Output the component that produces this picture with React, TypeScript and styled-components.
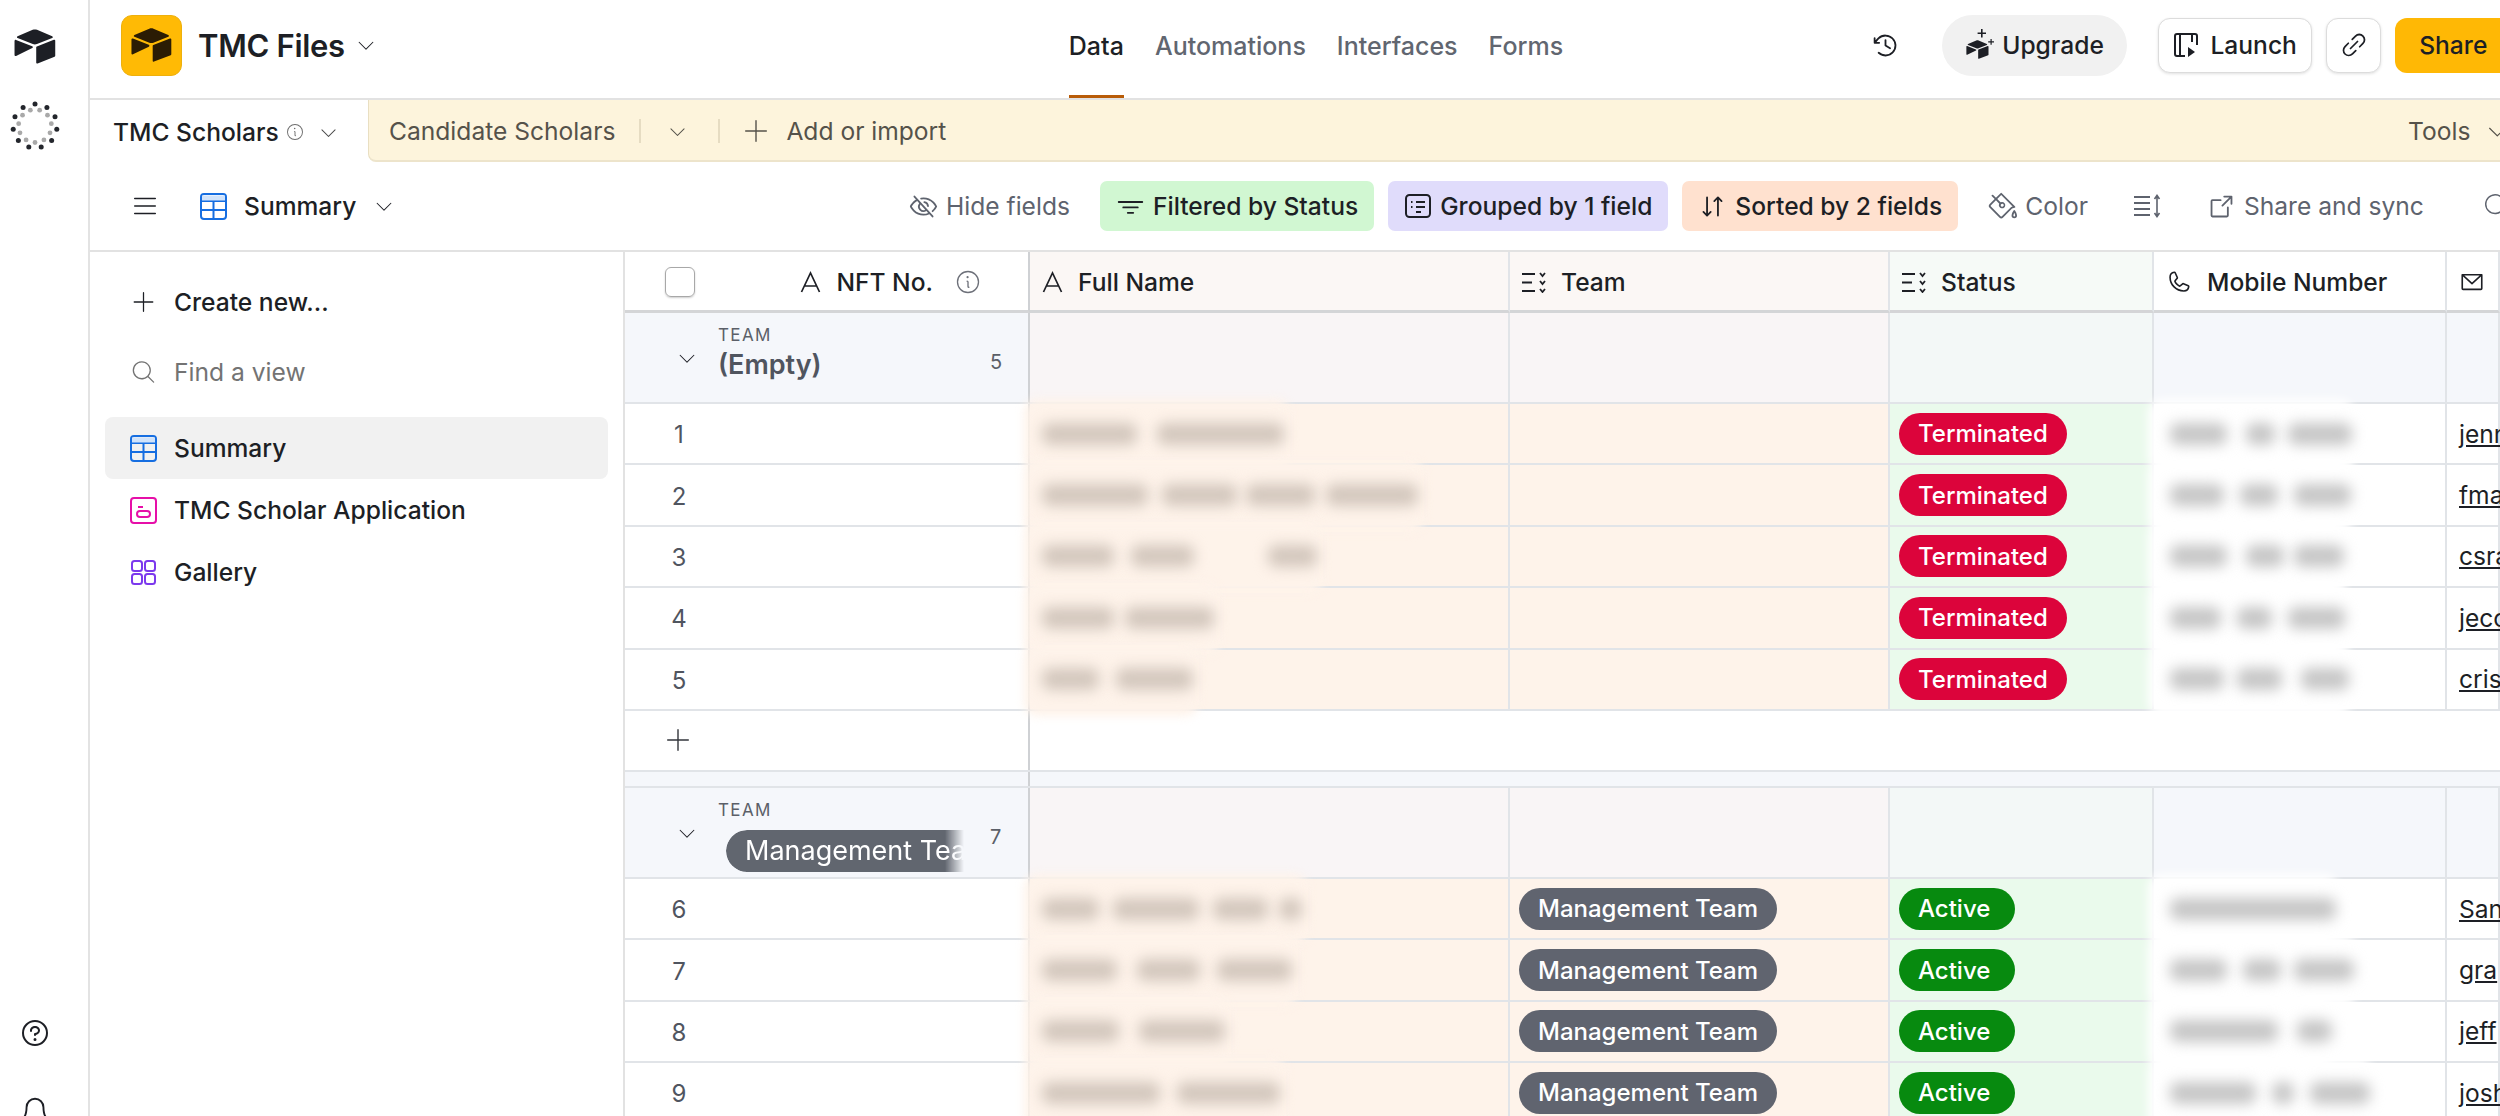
import React from 'react';
import styled, { createGlobalStyle } from 'styled-components';
import {
  PiArrowSquareOut,
  PiArrowsDownUp,
  PiBell,
  PiCaretDownLight,
  PiClockCounterClockwise,
  PiEnvelopeSimple,
  PiEyeSlash,
  PiFunnelSimple,
  PiInfoLight,
  PiLinkSimple,
  PiListLight,
  PiMagnifyingGlassLight,
  PiPaintBucket,
  PiPhone,
  PiPlusLight,
  PiQuestion,
} from 'react-icons/pi';

const COLUMNS = '405px 480px 380px 264px 293px 53px';
const ROW_HEIGHT = '61.4px';
const TEXT_SIZE = '24.6px';

const GlobalStyle = createGlobalStyle`
  html, body {
    margin: 0;
    height: 100%;
    overflow: hidden;
    background: #fff;
  }
  body {
    font-family: Inter, "Noto Sans", "Liberation Sans", sans-serif;
    color: #1d1f25;
  }
`;

const Page = styled.div`
  display: flex;
  width: 2500px;
  height: 1116px;
  overflow: hidden;
`;

const Rail = styled.nav`
  flex: 0 0 90px;
  display: flex;
  flex-direction: column;
  align-items: center;
  box-sizing: border-box;
  padding: 27px 18px 0 0;
  border-right: 2px solid #e3e3e3;
`;

const RailLogo = styled.div`
  display: flex;
  margin-bottom: 34px;
`;

const RailSpinner = styled.svg`
  width: 52px;
  height: 52px;
  flex: none;
`;

const RailHelp = styled.div`
  display: flex;
  margin-top: 865px;
  font-size: 32px;
  color: #1d1f25;
  flex: none;
`;

const RailBell = styled.div`
  display: flex;
  margin-top: 46px;
  font-size: 30px;
  color: #1d1f25;
  flex: none;
`;

const Main = styled.div`
  flex: 1;
  min-width: 0;
  display: flex;
  flex-direction: column;
`;

const Header = styled.header`
  flex: 0 0 100px;
  box-sizing: border-box;
  display: flex;
  align-items: center;
  padding: 0 0 8px 31px;
  border-bottom: 2px solid #e2e2e2;
  overflow: hidden;
`;

const AppBadge = styled.div`
  width: 61px;
  height: 61px;
  box-sizing: border-box;
  border: 1px solid #eeb00d;
  border-radius: 11px;
  background: #ffba05;
  display: flex;
  align-items: center;
  justify-content: center;
  margin-right: 16px;
  flex: none;
`;

const AppTitle = styled.div`
  font-size: 31px;
  font-weight: 600;
  letter-spacing: -0.3px;
  color: #1d1f25;
  width: 153px;
  white-space: nowrap;
`;

const HeaderCaret = styled.span`
  display: flex;
  margin-left: 10px;
  font-size: 22px;
`;

const TopNav = styled.div`
  display: flex;
  gap: 31px;
  margin: 2px 0 0 692px;
`;

const TopNavItem = styled.span<{ $active?: boolean }>`
  font-size: 25px;
  font-weight: 500;
  color: ${(p) => (p.$active ? '#1d1f25' : '#616670')};
  position: relative;
  &::after {
    content: '';
    display: ${(p) => (p.$active ? 'block' : 'none')};
    position: absolute;
    left: 0;
    right: 0;
    top: 64px;
    height: 4px;
    background: #b85c08;
  }
`;

const HeaderActions = styled.div`
  display: flex;
  align-items: center;
  margin-left: 308px;
  flex: none;
`;

const HistoryIcon = styled.span`
  display: flex;
  font-size: 29px;
  margin-right: 42px;
`;

const UpgradePill = styled.div`
  display: flex;
  align-items: center;
  gap: 7px;
  height: 61px;
  width: 185px;
  box-sizing: border-box;
  padding-left: 23px;
  border-radius: 31px;
  background: #f1f1f1;
  font-size: ${TEXT_SIZE};
  font-weight: 500;
  margin-right: 31px;
`;

const OutlineButton = styled.div<{ $square?: boolean }>`
  display: flex;
  align-items: center;
  justify-content: center;
  gap: 12px;
  height: 55px;
  width: ${(p) => (p.$square ? '55px' : '154px')};
  box-sizing: border-box;
  border: 1px solid #dcdcdc;
  border-radius: 12px;
  box-shadow: 0 1px 3px rgba(0, 0, 0, 0.12);
  background: #fff;
  font-size: ${TEXT_SIZE};
  font-weight: 500;
  margin-right: 14px;
`;

const ShareButton = styled.div`
  display: flex;
  align-items: center;
  height: 55px;
  width: 130px;
  box-sizing: border-box;
  padding-left: 24px;
  border-radius: 12px;
  background: #ffb805;
  font-size: ${TEXT_SIZE};
  font-weight: 500;
`;

const TabBar = styled.div`
  flex: 0 0 62px;
  display: flex;
  background: #fff;
`;

const ActiveTab = styled.div`
  flex: 0 0 278px;
  box-sizing: border-box;
  display: flex;
  align-items: center;
  padding: 2px 0 0 23px;
  font-size: ${TEXT_SIZE};
  font-weight: 500;
`;

const TabInfo = styled.span`
  display: flex;
  font-size: 20px;
  color: #6d6d6d;
  margin-left: 6px;
`;

const TabCaret = styled.span`
  display: flex;
  font-size: 21px;
  margin-left: 13px;
  color: #4a4a4a;
`;

const TabRest = styled.div`
  flex: 1;
  box-sizing: border-box;
  display: flex;
  align-items: center;
  padding: 2px 0 0 20px;
  background: #fdf4dc;
  border-left: 1px solid #e9dfc2;
  border-bottom: 2px solid #ede4cb;
  border-bottom-left-radius: 8px;
  font-size: ${TEXT_SIZE};
  color: #55524a;
  overflow: hidden;
`;

const TabDivider = styled.span`
  width: 2px;
  height: 24px;
  background: #e6dcc2;
  margin: 0 24px;
`;

const TabChevron = styled.span`
  display: flex;
  font-size: 21px;
  margin: 0 6px 0 2px;
`;

const TabAdd = styled.span`
  display: flex;
  align-items: center;
  gap: 15px;
  margin-left: -3px;
`;

const TabTools = styled.span`
  display: flex;
  align-items: center;
  gap: 15px;
  margin-left: auto;
  margin-right: -10px;
`;

const ViewBar = styled.div`
  flex: 0 0 90px;
  box-sizing: border-box;
  display: flex;
  align-items: center;
  padding-left: 40px;
  border-bottom: 2px solid #e2e2e2;
  overflow: hidden;
`;

const ViewName = styled.div`
  display: flex;
  align-items: center;
  flex: none;
  font-size: ${TEXT_SIZE};
  font-weight: 500;
  margin-left: 40px;
  gap: 17px;
  width: 228px;
`;

const ViewTools = styled.div`
  display: flex;
  align-items: center;
  gap: 14px;
  margin-left: 481px;
  flex: none;
`;

const ToolItem = styled.div`
  display: flex;
  align-items: center;
  gap: 8px;
  padding: 0 16px;
  height: 50px;
  font-size: ${TEXT_SIZE};
  font-weight: 400;
  color: #5e636e;
  white-space: nowrap;
  &:first-child {
    padding-left: 0;
  }
`;

const ToolIcon = styled.span<{ $size?: number }>`
  display: flex;
  flex: none;
  font-size: ${(p) => p.$size ?? 29}px;
`;

const FilterPill = styled.div<{ $bg: string }>`
  display: flex;
  align-items: center;
  gap: 8px;
  height: 50px;
  box-sizing: border-box;
  padding: 0 16px;
  border-radius: 7px;
  background: ${(p) => p.$bg};
  font-size: ${TEXT_SIZE};
  font-weight: 500;
  color: #1d1f25;
  white-space: nowrap;
`;

const SearchGhost = styled.span`
  display: flex;
  font-size: 30px;
  color: #5e636e;
  margin-left: 28px;
`;

const Body = styled.div`
  flex: 1;
  display: flex;
  min-height: 0;
`;

const Sidebar = styled.aside`
  flex: 0 0 535px;
  box-sizing: border-box;
  border-right: 2px solid #e2e2e2;
  padding: 30px 15px 0 15px;
`;

const SideAction = styled.div<{ $muted?: boolean }>`
  display: flex;
  align-items: center;
  height: 40px;
  padding-left: 25px;
  gap: 17px;
  margin-bottom: 30px;
  font-size: ${TEXT_SIZE};
  font-weight: ${(p) => (p.$muted ? 400 : 500)};
  color: ${(p) => (p.$muted ? '#737373' : '#1d1f25')};
`;

const SideIcon = styled.span`
  display: flex;
  font-size: 28px;
  width: 27px;
  justify-content: center;
`;

const SideViews = styled.div`
  display: flex;
  flex-direction: column;
  margin-top: -5px;
`;

const SideView = styled.div<{ $active?: boolean }>`
  display: flex;
  align-items: center;
  gap: 17px;
  height: 62px;
  padding-left: 25px;
  border-radius: 8px;
  background: ${(p) => (p.$active ? '#f1f1f1' : 'transparent')};
  font-size: ${TEXT_SIZE};
  font-weight: 500;
`;

const Grid = styled.div`
  flex: 1;
  min-width: 0;
  overflow: hidden;
`;

const Row = styled.div<{ $height: string }>`
  display: grid;
  grid-template-columns: ${COLUMNS};
  height: ${(p) => p.$height};
`;

const Cell = styled.div<{ $bg?: string; $strong?: boolean }>`
  box-sizing: border-box;
  position: relative;
  display: flex;
  align-items: center;
  min-width: 0;
  background: ${(p) => p.$bg ?? '#fff'};
  border-bottom: 2px solid #e1e4e8;
  border-right: 2px solid ${(p) => (p.$strong ? '#cfd1d4' : '#e1e4e8')};
  white-space: nowrap;
`;

const HeadRowCell = styled(Cell)`
  border-bottom: 3px solid #d4d5d7;
  padding: 2px 0 0 12px;
  gap: 15px;
  font-size: ${TEXT_SIZE};
  font-weight: 500;
`;

const Checkbox = styled.span`
  width: 30px;
  height: 30px;
  box-sizing: border-box;
  border: 1px solid #a8a8a8;
  border-radius: 6px;
  box-shadow: 0 1px 2px rgba(0, 0, 0, 0.2);
  margin: 0 auto 0 28px;
`;

const InfoGlyph = styled.span`
  display: flex;
  font-size: 28px;
  color: #6d7079;
  margin: 0 46px 0 6px;
`;

const HeadIcon = styled.span`
  display: flex;
  font-size: 26px;
`;

const GroupHead = styled(Cell)`
  padding-left: 51px;
  align-items: flex-start;
`;

const GroupCaret = styled.span`
  display: flex;
  font-size: 22px;
  margin-top: 34px;
  color: #1d1f25;
  flex: none;
`;

const GroupLabel = styled.div`
  margin: 12px 0 0 20px;
  width: 252px;
  flex: none;
  overflow: hidden;
`;

const GroupKey = styled.div`
  font-size: 17px;
  letter-spacing: 1.4px;
  color: #5b5f68;
  line-height: 20px;
`;

const GroupValue = styled.div`
  font-size: 27px;
  font-weight: 600;
  line-height: 36px;
  margin-top: 2px;
  color: #50555f;
`;

const FadedPill = styled.div`
  margin: 10px 0 0 8px;
  height: 42px;
  line-height: 42px;
  width: 238px;
  box-sizing: border-box;
  padding-left: 19px;
  border-radius: 21px 0 0 21px;
  background: #61666f;
  color: #fff;
  font-size: 27px;
  overflow: hidden;
  white-space: nowrap;
  -webkit-mask-image: linear-gradient(to right, #000 92%, transparent 100%);
  mask-image: linear-gradient(to right, #000 92%, transparent 100%);
`;

const GroupCount = styled.span`
  font-size: 20px;
  line-height: 24px;
  color: #5b5f68;
  margin: 37px 0 0 20px;
`;

const RowNumber = styled.span`
  width: 108px;
  padding-top: 2px;
  text-align: center;
  font-size: 24px;
  color: #50555f;
`;

const Blur = styled.div<{ $inset: number }>`
  display: flex;
  align-items: center;
  padding-left: ${(p) => p.$inset}px;
  position: relative;
  z-index: 2;
`;

const Smudge = styled.span<{ $w: number; $gap: number; $tone: string }>`
  display: block;
  width: ${(p) => p.$w}px;
  height: 22px;
  margin-right: ${(p) => p.$gap}px;
  background: ${(p) => p.$tone};
  filter: blur(7px);
  border-radius: 8px;
`;

const Smear = styled.span<{ $w: number; $bg: string }>`
  position: absolute;
  left: -6px;
  top: -5px;
  bottom: -7px;
  width: ${(p) => p.$w}px;
  background: ${(p) => p.$bg};
  filter: blur(5px);
  z-index: 1;
  border-radius: 14px;
`;

const Pill = styled.span<{ $bg: string; $tail?: number }>`
  display: inline-flex;
  align-items: center;
  height: 42px;
  padding: 0 ${(p) => p.$tail ?? 19}px 0 19px;
  margin-left: 9px;
  border-radius: 21px;
  background: ${(p) => p.$bg};
  color: #fff;
  font-size: 24px;
  font-weight: 500;
`;

const MailLink = styled.span`
  margin-left: 12px;
  font-size: 24.6px;
  color: #1d1f25;
  text-decoration: underline;
`;

const AddGlyph = styled.span`
  display: flex;
  width: 106px;
  justify-content: center;
  font-size: 30px;
  color: #33363c;
`;

const AddRow = styled.div`
  display: grid;
  grid-template-columns: 405px 1fr;
  height: 61px;
  box-sizing: border-box;
  border-bottom: 2px solid #e1e4e8;
`;

const AddCell = styled.div`
  display: flex;
  align-items: center;
  border-right: 2px solid #cfd1d4;
`;

const GroupGap = styled.div`
  display: grid;
  grid-template-columns: 405px 1fr;
  height: 16px;
  background: #f5f7fb;
  box-sizing: border-box;
  border-bottom: 2px solid #e1e4e8;
`;

const GapCell = styled.div`
  border-right: 2px solid #cfd1d4;
`;

const GroupGlyph = styled.svg`
  margin: 0 1px;
`;

const CubePaths = () => (
  <>
    <path d="M90 12.4 24.1 39.7c-3.7 1.5-3.6 6.7.1 8.2l66.2 26.2c5.8 2.3 12.3 2.3 18.1 0l66.2-26.2c3.7-1.5 3.7-6.7.1-8.2L108.8 12.4c-6-2.5-12.8-2.5-18.8 0" />
    <path d="M105.3 88.5v65.6c0 3.1 3.1 5.3 6 4.1l73.9-28.7c1.7-.7 2.8-2.3 2.8-4.1V59.8c0-3.1-3.2-5.3-6-4.1l-73.9 28.7c-1.7.6-2.8 2.2-2.8 4.1" />
    <path d="M88.1 91.8 17.7 125.7c-2.9 1.4-6.7-.7-6.7-4V60.1c0-1.2.6-2.2 1.4-3 .4-.3.8-.6 1.2-.8 1.1-.7 2.7-.9 4-.3l70.1 27.8c3.6 1.4 3.9 6.4.4 8" />
  </>
);

const Cube = ({ size, color }: { size: number; color: string }) => (
  <svg width={size} height={(size * 170) / 200} viewBox="0 0 200 170" fill={color}>
    <CubePaths />
  </svg>
);

const TableIcon = () => (
  <svg width="27" height="27" viewBox="0 0 27 27" fill="none" stroke="#166ee1" strokeWidth="2">
    <rect x="1" y="1" width="25" height="25" rx="3" />
    <path d="M1 8h25M1 17h25M13.5 8v18" />
    <path d="M2 2.5h23v5H2z" fill="#d0e3fb" stroke="none" />
  </svg>
);

const FormIcon = () => (
  <svg width="27" height="27" viewBox="0 0 27 27" fill="none" stroke="#e60fa8" strokeWidth="2">
    <rect x="1" y="1" width="25" height="25" rx="3" />
    <path d="M8 10h5" />
    <rect x="7" y="14" width="13" height="6" rx="3" />
  </svg>
);

const GalleryIcon = () => (
  <svg width="27" height="27" viewBox="0 0 27 27" fill="none" stroke="#7c39ed" strokeWidth="2">
    <rect x="2" y="2" width="10" height="10" rx="2.5" />
    <rect x="15" y="2" width="10" height="10" rx="2.5" />
    <rect x="2" y="15" width="10" height="10" rx="2.5" />
    <rect x="15" y="15" width="10" height="10" rx="2.5" />
  </svg>
);

const TextIcon = () => (
  <svg width="21" height="22" viewBox="0 0 21 22" fill="none" stroke="#1d1f25" strokeWidth="1.7">
    <path d="M1.5 21 10.5 2l9 19M4.8 15h11.4" />
  </svg>
);

const SelectIcon = () => (
  <svg width="24" height="21" viewBox="0 0 24 21" fill="none" stroke="#1d1f25" strokeWidth="1.8">
    <path d="M0 2h13M0 10.5h10M0 19h13" />
    <path d="M18 1l2.5 3 2.5-3M18 9l2.5 3 2.5-3M18 17l2.5 3 2.5-3" />
  </svg>
);

const LaunchIcon = () => (
  <svg width="25" height="25" viewBox="0 0 25 25" fill="none" stroke="#1d1f25" strokeWidth="2">
    <path d="M12 23H4a2 2 0 0 1-2-2V3a2 2 0 0 1 2-2h18a2 2 0 0 1 2 2v9M7 1v22M19 1v8" />
    <path d="M15 14l7 5-7 5z" fill="#1d1f25" stroke="none" />
  </svg>
);

const GroupIcon = () => (
  <GroupGlyph width="26" height="24" viewBox="0 0 26 24" fill="none" stroke="#1d1f25" strokeWidth="2">
    <rect x="1" y="1" width="24" height="22" rx="3.5" />
    <path d="M11 8h9M11 13h9M6 8h1.5M6 13h1.5M11 18h5" />
  </GroupGlyph>
);

const RowHeightIcon = () => (
  <svg width="27" height="24" viewBox="0 0 27 24" fill="none" stroke="#5e636e" strokeWidth="2">
    <path d="M0 3h16M0 9h16M0 15h16M0 21h16" />
    <path d="M23 2v20M20.5 5 23 1.5 25.5 5M20.5 19 23 22.5 25.5 19" strokeWidth="1.6" />
  </svg>
);

const Sparkled = () => (
  <svg width="30" height="32" viewBox="0 0 30 32" fill="#1d1f25">
    <g transform="translate(0 10) scale(0.125)">
      <CubePaths />
    </g>
    <path d="M16 0h1.6v3.4H21V5h-3.4v3.4H16V5h-3.4V3.4H16zM25.5 10h1.2v2.3H29v1.2h-2.3v2.3h-1.2v-2.3h-2.3v-1.2h2.3z" />
  </svg>
);

const dots = (radius: number, offset: number) =>
  Array.from({ length: 11 }, (_, i) => {
    const a = ((i + offset) / 11) * Math.PI * 2 - Math.PI / 2;
    return { x: 26 + radius * Math.cos(a), y: 26 + radius * Math.sin(a) };
  });

const Spinner = () => (
  <RailSpinner viewBox="0 0 52 52">
    {dots(22, 0).map((d, i) => (
      <circle key={`o${i}`} cx={d.x} cy={d.y} r="2.5" fill="#23262c" />
    ))}
    {dots(16.5, 0.5).map((d, i) => (
      <circle key={`i${i}`} cx={d.x} cy={d.y} r="2.4" fill="#a9a9a9" />
    ))}
  </RailSpinner>
);

type ScholarRow = {
  no: number;
  name: number[];
  phone: number[];
  mail: string;
};

const TINT = {
  headName: '#fbf7f5',
  headStatus: '#f6faf7',
  groupKey: '#f5f7fb',
  groupName: '#f9f5f6',
  groupStatus: '#f3f8f7',
  cellName: '#fef3ea',
  cellStatus: '#eafaec',
};

const NAME_TONE = '#d3c7bd';
const PHONE_TONE = '#c6c6c6';

const emptyGroup: ScholarRow[] = [
  { no: 1, name: [95, 20, 127], phone: [57, 19, 29, 13, 64], mail: 'jenn' },
  { no: 2, name: [106, 14, 75, 9, 69, 11, 92], phone: [54, 16, 38, 16, 57], mail: 'fma' },
  { no: 3, name: [72, 17, 63, 74, 49], phone: [57, 19, 38, 10, 50], mail: 'csra' },
  { no: 4, name: [72, 11, 89], phone: [51, 16, 35, 16, 57], mail: 'jeco' },
  { no: 5, name: [57, 17, 77], phone: [54, 13, 45, 19, 48], mail: 'cris' },
];

const teamGroup: ScholarRow[] = [
  { no: 6, name: [57, 14, 86, 14, 55, 11, 23], phone: [166], mail: 'San' },
  { no: 7, name: [75, 20, 63, 17, 75], phone: [57, 16, 38, 13, 60], mail: 'gra' },
  { no: 8, name: [77, 20, 86], phone: [108, 19, 35], mail: 'jeff' },
  { no: 9, name: [118, 17, 103], phone: [86, 16, 22, 16, 60], mail: 'josh' },
];

const Redacted = ({ parts, tone, bg, inset }: { parts: number[]; tone: string; bg: string; inset: number }) => {
  const total = parts.reduce((sum, part) => sum + part, 0);
  return (
    <>
      <Smear $w={total + 24} $bg={bg} />
      <Blur $inset={inset}>
        {parts.map((part, i) =>
          i % 2 === 0 ? (
            <Smudge key={i} $w={part} $gap={parts[i + 1] ?? 0} $tone={tone} />
          ) : null,
        )}
      </Blur>
    </>
  );
};

const Records = ({ items, active }: { items: ScholarRow[]; active: boolean }) => (
  <>
    {items.map((item) => (
      <Row key={item.no} $height={ROW_HEIGHT}>
        <Cell $strong>
          <RowNumber>{item.no}</RowNumber>
        </Cell>
        <Cell $bg={TINT.cellName}>
          <Redacted parts={item.name} tone={NAME_TONE} bg={TINT.cellName} inset={12} />
        </Cell>
        <Cell $bg={TINT.cellName}>{active && <Pill $bg="#60646f">Management Team</Pill>}</Cell>
        <Cell $bg={TINT.cellStatus}>
          {active ? (
            <Pill $bg="#078a0f" $tail={25}>
              Active
            </Pill>
          ) : (
            <Pill $bg="#dc043b">Terminated</Pill>
          )}
        </Cell>
        <Cell>
          <Redacted parts={item.phone} tone={PHONE_TONE} bg="#fff" inset={16} />
        </Cell>
        <Cell>
          <MailLink>{item.mail}</MailLink>
        </Cell>
      </Row>
    ))}
  </>
);

const GroupRow = ({ count, children }: { count: number; children: React.ReactNode }) => (
  <Row $height="91px">
    <GroupHead $bg={TINT.groupKey} $strong>
      <GroupCaret>
        <PiCaretDownLight />
      </GroupCaret>
      <GroupLabel>
        <GroupKey>TEAM</GroupKey>
        {children}
      </GroupLabel>
      <GroupCount>{count}</GroupCount>
    </GroupHead>
    <Cell $bg={TINT.groupName} />
    <Cell $bg={TINT.groupName} />
    <Cell $bg={TINT.groupStatus} />
    <Cell $bg={TINT.groupKey} />
    <Cell $bg={TINT.groupKey} />
  </Row>
);

export default function App() {
  return (
    <Page>
      <GlobalStyle />
      <Rail>
        <RailLogo>
          <Cube size={46} color="#1d1f25" />
        </RailLogo>
        <Spinner />
        <RailHelp>
          <PiQuestion />
        </RailHelp>
        <RailBell>
          <PiBell />
        </RailBell>
      </Rail>
      <Main>
        <Header>
          <AppBadge>
            <Cube size={45} color="#2b1c04" />
          </AppBadge>
          <AppTitle>TMC Files</AppTitle>
          <HeaderCaret>
            <PiCaretDownLight />
          </HeaderCaret>
          <TopNav>
            <TopNavItem $active>Data</TopNavItem>
            <TopNavItem>Automations</TopNavItem>
            <TopNavItem>Interfaces</TopNavItem>
            <TopNavItem>Forms</TopNavItem>
          </TopNav>
          <HeaderActions>
            <HistoryIcon>
              <PiClockCounterClockwise />
            </HistoryIcon>
            <UpgradePill>
              <Sparkled />
              Upgrade
            </UpgradePill>
            <OutlineButton>
              <LaunchIcon />
              Launch
            </OutlineButton>
            <OutlineButton $square>
              <ToolIcon $size={28}>
                <PiLinkSimple />
              </ToolIcon>
            </OutlineButton>
            <ShareButton>Share</ShareButton>
          </HeaderActions>
        </Header>
        <TabBar>
          <ActiveTab>
            TMC Scholars
            <TabInfo>
              <PiInfoLight />
            </TabInfo>
            <TabCaret>
              <PiCaretDownLight />
            </TabCaret>
          </ActiveTab>
          <TabRest>
            Candidate Scholars
            <TabDivider />
            <TabChevron>
              <PiCaretDownLight />
            </TabChevron>
            <TabDivider />
            <TabAdd>
              <ToolIcon $size={30}>
                <PiPlusLight />
              </ToolIcon>
              Add or import
            </TabAdd>
            <TabTools>
              Tools
              <PiCaretDownLight />
            </TabTools>
          </TabRest>
        </TabBar>
        <ViewBar>
          <ToolIcon $size={30}>
            <PiListLight />
          </ToolIcon>
          <ViewName>
            <TableIcon />
            Summary
            <ToolIcon $size={22}>
              <PiCaretDownLight />
            </ToolIcon>
          </ViewName>
          <ViewTools>
            <ToolItem>
              <ToolIcon>
                <PiEyeSlash />
              </ToolIcon>
              Hide fields
            </ToolItem>
            <FilterPill $bg="#d1f7d2">
              <ToolIcon>
                <PiFunnelSimple />
              </ToolIcon>
              Filtered by Status
            </FilterPill>
            <FilterPill $bg="#e0dcfb">
              <GroupIcon />
              Grouped by 1 field
            </FilterPill>
            <FilterPill $bg="#ffe1cf">
              <ToolIcon>
                <PiArrowsDownUp />
              </ToolIcon>
              Sorted by 2 fields
            </FilterPill>
            <ToolItem>
              <ToolIcon>
                <PiPaintBucket />
              </ToolIcon>
              Color
            </ToolItem>
            <ToolItem>
              <RowHeightIcon />
            </ToolItem>
            <ToolItem>
              <ToolIcon>
                <PiArrowSquareOut />
              </ToolIcon>
              Share and sync
            </ToolItem>
            <SearchGhost>
              <PiMagnifyingGlassLight />
            </SearchGhost>
          </ViewTools>
        </ViewBar>
        <Body>
          <Sidebar>
            <SideAction>
              <SideIcon>
                <PiPlusLight />
              </SideIcon>
              Create new...
            </SideAction>
            <SideAction $muted>
              <SideIcon>
                <PiMagnifyingGlassLight />
              </SideIcon>
              Find a view
            </SideAction>
            <SideViews>
              <SideView $active>
                <TableIcon />
                Summary
              </SideView>
              <SideView>
                <FormIcon />
                TMC Scholar Application
              </SideView>
              <SideView>
                <GalleryIcon />
                Gallery
              </SideView>
            </SideViews>
          </Sidebar>
          <Grid>
            <Row $height="61px">
              <HeadRowCell $strong>
                <Checkbox />
                <HeadIcon>
                  <TextIcon />
                </HeadIcon>
                NFT No.
                <InfoGlyph>
                  <PiInfoLight />
                </InfoGlyph>
              </HeadRowCell>
              <HeadRowCell $bg={TINT.headName}>
                <HeadIcon>
                  <TextIcon />
                </HeadIcon>
                Full Name
              </HeadRowCell>
              <HeadRowCell $bg={TINT.headName}>
                <HeadIcon>
                  <SelectIcon />
                </HeadIcon>
                Team
              </HeadRowCell>
              <HeadRowCell $bg={TINT.headStatus}>
                <HeadIcon>
                  <SelectIcon />
                </HeadIcon>
                Status
              </HeadRowCell>
              <HeadRowCell>
                <HeadIcon>
                  <PiPhone />
                </HeadIcon>
                Mobile Number
              </HeadRowCell>
              <HeadRowCell>
                <HeadIcon>
                  <PiEnvelopeSimple />
                </HeadIcon>
              </HeadRowCell>
            </Row>
            <GroupRow count={5}>
              <GroupValue>(Empty)</GroupValue>
            </GroupRow>
            <Records items={emptyGroup} active={false} />
            <AddRow>
              <AddCell>
                <AddGlyph>
                  <PiPlusLight />
                </AddGlyph>
              </AddCell>
              <div />
            </AddRow>
            <GroupGap>
              <GapCell />
              <div />
            </GroupGap>
            <GroupRow count={7}>
              <FadedPill>Management Team</FadedPill>
            </GroupRow>
            <Records items={teamGroup} active />
          </Grid>
        </Body>
      </Main>
    </Page>
  );
}
